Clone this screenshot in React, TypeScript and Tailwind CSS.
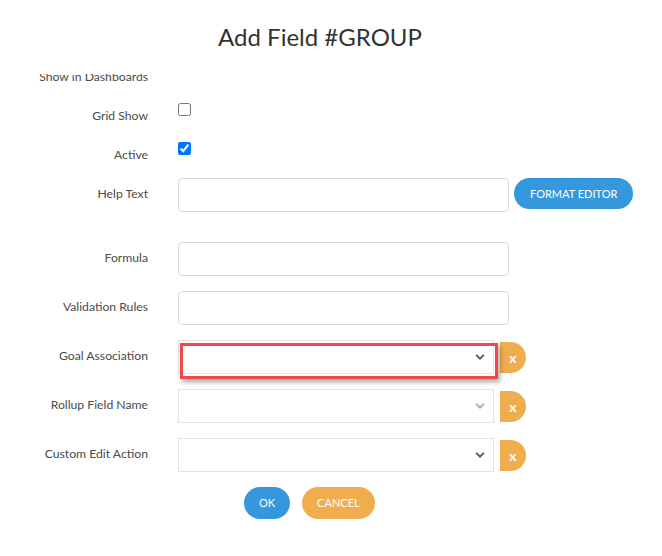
import React from "react";

const labelCls =
  "w-[148px] shrink-0 text-right pt-[7px] text-[12.2px] leading-[18px] text-[#4a4a4a] whitespace-nowrap";

function Chevron({ light }: { light?: boolean }) {
  return (
    <svg width="10" height="7" viewBox="0 0 10 7" className="absolute right-[8px] top-1/2 -translate-y-1/2">
      <path d="M1.2 1.4 L5 5.2 L8.8 1.4" fill="none" stroke={light ? "#aaa" : "#555"} strokeWidth="1.8" />
    </svg>
  );
}

function CheckRow({ label, checked, hideBox }: { label: string; checked?: boolean; hideBox?: boolean }) {
  return (
    <div className="flex items-start gap-[30px] h-[24px] mb-[15px]">
      <div className={labelCls}>{label}</div>
      {!hideBox && <input type="checkbox" defaultChecked={checked} className="mt-[3px] w-[13px] h-[13px] m-0" />}
    </div>
  );
}

function TextRow({ label, extra }: { label: string; extra?: boolean }) {
  return (
    <div className={`flex items-start gap-[30px] ${extra ? "mb-[30px]" : "mb-[15px]"}`}>
      <div className={labelCls}>{label}</div>
      <div className="w-[331px] h-[34px] border border-[#d9d9d9] rounded-[4px] bg-white" />
      {extra && (
        <button className="ml-[-25px] h-[31px] px-[16px] rounded-full bg-[#3598dc] text-white text-[11px] leading-none">
          FORMAT EDITOR
        </button>
      )}
    </div>
  );
}

function SelectRow({ label, light, highlight }: { label: string; light?: boolean; highlight?: boolean }) {
  return (
    <div className="flex items-start gap-[30px] mb-[15px]">
      <div className={labelCls}>{label}</div>
      <div className="flex items-start">
        <div className="relative w-[316px] h-[34px] border border-[#e3e3e3] bg-white">
          <Chevron light={light} />
          {highlight && (
            <div className="absolute left-[1px] top-[2px] w-[318px] h-[36px] border-[3px] border-[#f44848] shadow-[2px_3px_5px_rgba(0,0,0,0.35)]" />
          )}
        </div>
        <div className="ml-[6px] mt-[2px] w-[26px] h-[31px] rounded-r-full bg-[#f0ad4e] text-white text-[14px] font-bold flex items-center justify-center">
          x
        </div>
      </div>
    </div>
  );
}

export default function App() {
  return (
    <div className="w-[662px] h-[556px] bg-white overflow-hidden font-['Lato',sans-serif]">
      <div className="h-[74px] w-[640px] pt-[23px] text-center text-[24px] leading-[28px] text-[#333]">
        Add Field #GROUP
      </div>
      <div className="h-[482px] overflow-hidden">
        <div className="mt-[-13px]">
          <CheckRow label="Show in Dashboards" hideBox />
          <CheckRow label="Grid Show" />
          <CheckRow label="Active" checked />
          <TextRow label="Help Text" extra />
          <TextRow label="Formula" />
          <TextRow label="Validation Rules" />
          <SelectRow label="Goal Association" highlight />
          <SelectRow label="Rollup Field Name" light />
          <SelectRow label="Custom Edit Action" />
          <div className="flex gap-[12px] ml-[244px]">
            <button className="h-[32px] px-[15px] rounded-full bg-[#3598dc] text-white text-[11px]">OK</button>
            <button className="h-[32px] px-[15px] rounded-full bg-[#f0ad4e] text-white text-[11px]">CANCEL</button>
          </div>
        </div>
      </div>
    </div>
  );
}
